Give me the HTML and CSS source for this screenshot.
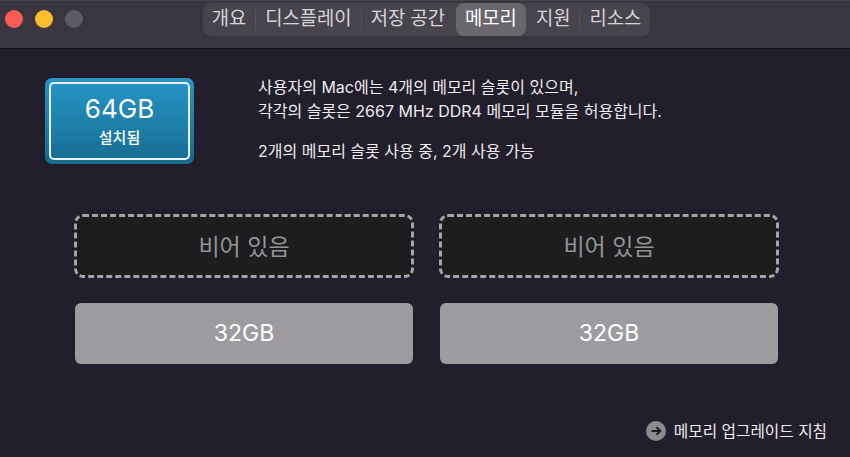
FILE: index.html
```html
<!DOCTYPE html>
<html lang="ko">
<head>
    <meta charset="UTF-8">
    <title>메모리</title>
    <link rel="stylesheet" href="styles.css">
</head>
<body>
    <header class="titlebar">
        <div class="lights">
            <span class="light red"></span>
            <span class="light yellow"></span>
            <span class="light gray"></span>
        </div>
        <nav class="tabs">
            <span class="tab">개요</span>
            <span class="sep"></span>
            <span class="tab">디스플레이</span>
            <span class="sep"></span>
            <span class="tab">저장 공간</span>
            <span class="tab active">메모리</span>
            <span class="tab">지원</span>
            <span class="sep"></span>
            <span class="tab">리소스</span>
        </nav>
    </header>

    <main class="content">
        <section class="summary">
            <div class="installed">
                <div class="installed-inner">
                    <div class="installed-size">64GB</div>
                    <div class="installed-label">설치됨</div>
                </div>
            </div>
            <div class="info">
                <p>사용자의 Mac에는 4개의 메모리 슬롯이 있으며,<br>각각의 슬롯은 2667 MHz DDR4 메모리 모듈을 허용합니다.</p>
                <p>2개의 메모리 슬롯 사용 중, 2개 사용 가능</p>
            </div>
        </section>

        <section class="slots">
            <div class="slot empty">비어 있음</div>
            <div class="slot empty">비어 있음</div>
            <div class="slot used">32GB</div>
            <div class="slot used">32GB</div>
        </section>

        <footer class="guide">
            <svg class="guide-icon" width="20" height="20" viewBox="0 0 20 20">
                <circle cx="10" cy="10" r="10" fill="#8c8a8e"/>
                <path d="M5.5 10H14M10.5 6.2L14.3 10L10.5 13.8" fill="none" stroke="#1f1c26" stroke-width="2"/>
            </svg>
            <span>메모리 업그레이드 지침</span>
        </footer>
    </main>
</body>
</html>
```

FILE: styles.css
```css
html, body {
    margin: 0;
    height: 100%;
}

body {
    background: #221e2b;
    color: #eeecef;
    font-family: Inter, 'Noto Sans CJK KR', sans-serif;
    overflow: hidden;
}

/* Title bar */
.titlebar {
    position: relative;
    height: 49px;
    box-sizing: border-box;
    display: flex;
    justify-content: center;
    padding: 3px 0 0 3px;
    background: #3a3640;
    border-top: 1px solid #47434d;
    border-bottom: 1px solid #17141c;
}

.lights {
    position: absolute;
    left: 5px;
    top: 9px;
    display: flex;
    gap: 12px;
}

.light {
    width: 18px;
    height: 18px;
    border-radius: 50%;
}

.red { background: #fb5a55; }
.yellow { background: #fdbc2c; }
.gray { background: #5c5a62; }

.tabs {
    display: flex;
    align-items: center;
    height: 33px;
    margin-top: -1px;
    background: #48444e;
    border-radius: 8px;
    color: #d6d4d8;
    font-size: 18.8px;
}

.tab {
    height: 33px;
    line-height: 32px;
    padding: 0 9px;
    border-radius: 8px;
}

.tab.active {
    background: #69666e;
    color: #fff;
    margin: 0 1px 0 2px;
}

.sep {
    width: 1px;
    height: 20px;
    background: #57535d;
}

/* Main content */
.content {
    padding: 29px 71px 0 45px;
}

.summary {
    display: flex;
    gap: 64px;
    height: 86px;
}

.installed {
    width: 149px;
    height: 86px;
    box-sizing: border-box;
    padding: 4px;
    background: linear-gradient(#2a94c4, #176a8e);
    border-radius: 7px;
}

.installed-inner {
    height: 100%;
    box-sizing: border-box;
    border: 2px solid #e6f0f5;
    border-radius: 5px;
    background: linear-gradient(#2593c5, #186f93);
    color: #fff;
    text-align: center;
}

.installed-size {
    margin-top: 9px;
    font-size: 26px;
    line-height: 32px;
}

.installed-label {
    margin-top: 2px;
    font-size: 15px;
    font-weight: 500;
    line-height: 22px;
}

.info {
    margin-top: -3px;
    font-size: 16px;
    line-height: 24px;
}

.info p {
    margin: 0 0 16px;
}

.slots {
    display: grid;
    grid-template-columns: 340px 340px;
    column-gap: 25px;
    row-gap: 25px;
    margin: 50px 0 0 29px;
    text-align: center;
    font-size: 23px;
}

.slot {
    box-sizing: border-box;
}

.slot.empty {
    height: 64px;
    line-height: 60px;
    background: #1d1c1e;
    border: 3px dashed #a5a3a7;
    border-radius: 9px;
    color: #959397;
}

.slot.used {
    width: 338px;
    height: 61px;
    margin-left: 1px;
    line-height: 61px;
    background: #9d9b9f;
    border-radius: 6px;
    color: #fff;
}

.guide {
    display: flex;
    align-items: center;
    justify-content: flex-end;
    gap: 8px;
    margin-top: 55px;
    margin-right: -48px;
    font-size: 15.7px;
}
```
